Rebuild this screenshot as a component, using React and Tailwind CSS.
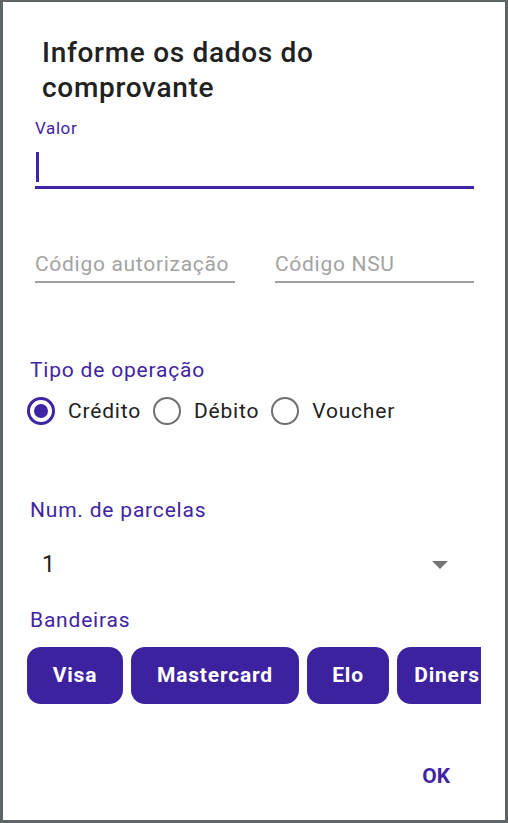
import React, { useState } from 'react';

const PURPLE = 'text-[#3f24a3]';

const Radio = ({ checked, label, onClick }) => (
  <button type="button" onClick={onClick} className="flex items-center">
    {checked ? (
      <span className="flex h-[28px] w-[28px] items-center justify-center rounded-full border-[3px] border-[#3f24a3]">
        <span className="h-[14px] w-[14px] rounded-full bg-[#3f24a3]" />
      </span>
    ) : (
      <span className="h-[28px] w-[28px] rounded-full border-[2.5px] border-[#6f6f6f]" />
    )}
    <span className="ml-[13px] text-[21px] leading-[24px] tracking-[0.8px] text-[#212121]">{label}</span>
  </button>
);

const App = () => {
  const [valor, setValor] = useState('');
  const [tipo, setTipo] = useState('credito');
  const bandeiras = [
    { name: 'Visa', w: 'w-[96px]' },
    { name: 'Mastercard', w: 'w-[168px]' },
    { name: 'Elo', w: 'w-[82px]' },
    { name: 'Diners', w: 'w-[100px]' },
  ];

  return (
    <div className="h-[823px] w-[508px] bg-[#5f6466] pb-[3px] pl-[3px] pr-[3px] pt-[2px]" style={{ fontFamily: 'Roboto, "Noto Sans", sans-serif' }}>
      <div className="flex h-full flex-col bg-white">
        <h2 className="ml-[39px] mt-[33px] text-[28px] font-medium leading-[35px] tracking-[0.7px] text-[#212121]">
          Informe os dados do
          <br />
          comprovante
        </h2>

        <div className="ml-[32px] mr-[31px] mt-[13px]">
          <div className={`text-[17px] leading-[20px] tracking-[0.6px] ${PURPLE}`}>Valor</div>
          <div className="relative h-[51px] border-b-[3px] border-[#3f24a3]">
            <input
              value={valor}
              onChange={e => setValor(e.target.value)}
              className="h-full w-full bg-transparent text-[20px] outline-none"
            />
            <span className="absolute left-[1px] top-[14px] h-[30px] w-[3px] bg-[#3f24a3]" />
          </div>

          <div className="mt-[63px] flex gap-[40px]">
            <div className="w-[200px] whitespace-nowrap border-b-2 border-[#9e9e9e] pb-[5px] text-[21px] leading-[24px] tracking-[0.7px] text-[#a3a3a3]">Código autorização</div>
            <div className="flex-1 whitespace-nowrap border-b-2 border-[#9e9e9e] pb-[5px] text-[21px] leading-[24px] tracking-[0.7px] text-[#a3a3a3]">Código NSU</div>
          </div>
        </div>

        <div className="ml-[24px] mr-[27px]">
          <div className={`ml-[3px] mt-[75px] text-[21px] leading-[24px] tracking-[0.8px] ${PURPLE}`}>Tipo de operação</div>
          <div className="mt-[15px] flex gap-[12px]">
            <Radio checked={tipo === 'credito'} label="Crédito" onClick={() => setTipo('credito')} />
            <Radio checked={tipo === 'debito'} label="Débito" onClick={() => setTipo('debito')} />
            <Radio checked={tipo === 'voucher'} label="Voucher" onClick={() => setTipo('voucher')} />
          </div>

          <div className={`ml-[3px] mt-[73px] text-[21px] leading-[24px] tracking-[0.8px] ${PURPLE}`}>Num. de parcelas</div>
          <div className="mt-[23px] flex h-[40px] items-center justify-between">
            <span className="ml-[15px] text-[23px] text-[#212121]">1</span>
            <svg width="16" height="8" viewBox="0 0 16 8" className="mr-[30px]">
              <path d="M0 0 L16 0 L8 8 Z" fill="#757575" />
            </svg>
          </div>

          <div className={`ml-[3px] mt-[23px] text-[21px] leading-[24px] tracking-[0.8px] ${PURPLE}`}>Bandeiras</div>
          <div className="mt-[15px] flex w-[454px] gap-[8px] overflow-hidden">
            {bandeiras.map(b => (
              <button
                key={b.name}
                type="button"
                className={`${b.w} h-[57px] shrink-0 whitespace-nowrap rounded-[14px] bg-[#3d22a0] text-[21px] font-bold tracking-[0.8px] text-white`}
              >
                {b.name}
              </button>
            ))}
          </div>
        </div>

        <div className="mb-[32px] mr-[55px] mt-auto flex justify-end">
          <button type="button" className={`text-[21px] font-bold leading-[24px] ${PURPLE}`}>OK</button>
        </div>
      </div>
    </div>
  );
};

export default App;
